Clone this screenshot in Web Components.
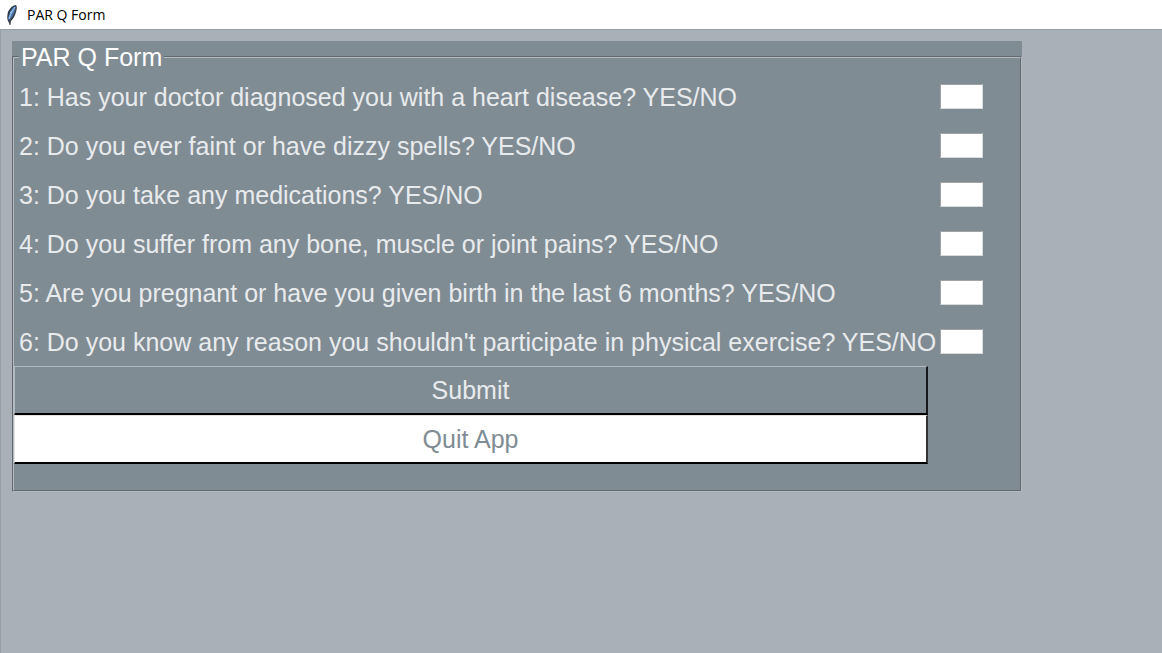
<!DOCTYPE html>
<html lang="en">
<head>
<meta charset="utf-8">
<title>PAR Q Form</title>
<style>
html{height:100%}
body{margin:0;min-height:100%;display:flex;background:#a9b0b7}
app-window{flex:1}
</style>
</head>
<body>
<app-window heading="PAR Q Form">
  <form-panel heading="PAR Q Form">
    <form-question>1: Has your doctor diagnosed you with a heart disease? YES/NO</form-question>
    <form-question>2: Do you ever faint or have dizzy spells? YES/NO</form-question>
    <form-question>3: Do you take any medications? YES/NO</form-question>
    <form-question>4: Do you suffer from any bone, muscle or joint pains? YES/NO</form-question>
    <form-question>5: Are you pregnant or have you given birth in the last 6 months? YES/NO</form-question>
    <form-question>6: Do you know any reason you shouldn't participate in physical exercise? YES/NO</form-question>
    <form-button>Submit</form-button>
    <form-button class="light">Quit App</form-button>
  </form-panel>
</app-window>

<template id="window-template">
<style>
:host{display:flex;flex-direction:column;box-sizing:border-box}
header{display:flex;align-items:center;gap:7px;height:29px;padding-left:4px;background:#fff;color:#000;box-sizing:border-box}
h1{margin:0;font:14px/20px "Open Sans","Noto Sans",sans-serif}
svg{display:block;width:16px;height:22px}
main{flex:1;padding:11px 140px 20px 11px;border:solid #989fa4;border-width:1px 0 0 1px}
</style>
<header>
  <svg viewBox="0 0 16 22" aria-hidden="true">
    <path d="M12 1C9 1 6 4 4 8C3 12 3 15 4 17L6 21L7 17C9 15 11 12 12 8C13 5 13 2 12 1Z" fill="#2b3744"/>
    <path d="M11 2C8 4 6 7 5 11C4 14 4 16 5 16C8 14 10 10 11 7C12 5 12 3 11 2Z" fill="#4a7fc0"/>
    <path d="M11 3C8 7 6 11 5 15M9 6L6 9" fill="none" stroke="#a8c6e8" stroke-width="1"/>
    <path d="M12 4C11 8 9 12 6 16L6 21" fill="none" stroke="#4a5056" stroke-width="1"/>
  </svg>
  <h1></h1>
</header>
<main><slot></slot></main>
</template>

<template id="panel-template">
<style>
:host{display:block;background:#808c94;font:25px/30px "Liberation Sans",Arial,sans-serif;color:#e8ebed}
fieldset{margin:0;padding:0 0 26px;border:2px groove #b2bbc1;min-width:0}
legend{padding:1px 2px 0;margin-left:5px;color:#fff}
</style>
<fieldset><legend></legend><slot></slot></fieldset>
</template>

<template id="question-template">
<style>
:host{display:block}
.row{display:grid;grid-template-columns:minmax(0,1fr) 43px;column-gap:2px;align-items:center;min-height:49px;padding:0 37px 0 5px;box-sizing:border-box}
input{box-sizing:border-box;width:100%;height:25px;margin:0;padding:0 2px;border:1px solid;border-color:#a2a1a4 #d9dcde #d9dcde #a2a1a4;background:#fff;color:#222;font:16px "Liberation Sans",Arial,sans-serif;border-radius:0}
</style>
<div class="row"><label for="answer"><slot></slot></label><input id="answer" type="text"></div>
</template>

<template id="button-template">
<style>
:host{display:block;padding-right:92px}
button{display:block;box-sizing:border-box;width:100%;min-height:49px;margin:0;padding:0 4px;background:#808c94;color:#e8ebed;font:inherit;border:solid;border-width:1px 2px 2px 1px;border-color:#b2bbc1 #15181a #000 #b2bbc1;border-radius:0}
:host(.light) button{background:#fff;color:#808c94;border-color:#e3e3e3 #333 #000 #e3e3e3}
</style>
<button type="button"><slot></slot></button>
</template>

<script>
class TemplateElement extends HTMLElement {
  constructor() {
    super();
    this.attachShadow({mode: 'open'}).append(
      document.getElementById(this.constructor.template).content.cloneNode(true));
  }
}
class AppWindow extends TemplateElement {
  static template = 'window-template';
  connectedCallback() { this.shadowRoot.querySelector('h1').textContent = this.getAttribute('heading'); }
}
class FormPanel extends TemplateElement {
  static template = 'panel-template';
  connectedCallback() { this.shadowRoot.querySelector('legend').textContent = this.getAttribute('heading'); }
}
class FormQuestion extends TemplateElement {
  static template = 'question-template';
  connectedCallback() { this.shadowRoot.querySelector('input').setAttribute('aria-label', this.textContent); }
}
class FormButton extends TemplateElement {
  static template = 'button-template';
}
customElements.define('app-window', AppWindow);
customElements.define('form-panel', FormPanel);
customElements.define('form-question', FormQuestion);
customElements.define('form-button', FormButton);
</script>
</body>
</html>
